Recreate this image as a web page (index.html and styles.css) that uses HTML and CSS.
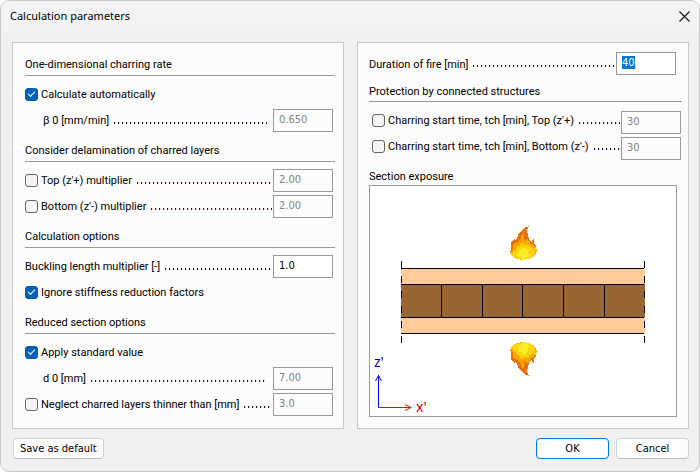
FILE: index.html
```html
<!DOCTYPE html>
<html lang="en">
<head>
<meta charset="utf-8">
<title>Calculation parameters</title>
<link rel="stylesheet" href="styles.css">
</head>
<body>
<form class="dialog">
  <header class="titlebar">
    <h1>Calculation parameters</h1>
    <button type="button" class="close" aria-label="Close"><svg width="11" height="11" viewBox="0 0 11 11"><path d="M.5.5l10 10M10.500.5l-10 10" stroke="#1a1a1a" stroke-width="1.200" fill="none"/></svg></button>
  </header>
  <main class="panels">
    <div class="panel left">
      <section>
        <h2>One-dimensional charring rate</h2>
        <div class="row"><input type="checkbox" id="auto" checked><label for="auto">Calculate automatically</label></div>
        <div class="row indent"><label for="beta">β 0 [mm/min]</label><span class="dots short"></span><input type="text" id="beta" value="0.650" disabled></div>
      </section>
      <section>
        <h2>Consider delamination of charred layers</h2>
        <div class="row"><input type="checkbox" id="top"><label for="top">Top (z'+) multiplier</label><span class="dots"></span><input type="text" aria-label="Top multiplier" value="2.00" disabled></div>
        <div class="row"><input type="checkbox" id="bottom"><label for="bottom">Bottom (z'-) multiplier</label><span class="dots"></span><input type="text" aria-label="Bottom multiplier" value="2.00" disabled></div>
      </section>
      <section>
        <h2>Calculation options</h2>
        <div class="row"><label for="buckling">Buckling length multiplier [-]</label><span class="dots"></span><input type="text" id="buckling" value="1.0"></div>
        <div class="row"><input type="checkbox" id="ignore" checked><label for="ignore">Ignore stiffness reduction factors</label></div>
      </section>
      <section>
        <h2>Reduced section options</h2>
        <div class="row"><input type="checkbox" id="standard" checked><label for="standard">Apply standard value</label></div>
        <div class="row indent"><label for="d0">d 0 [mm]</label><span class="dots short"></span><input type="text" id="d0" value="7.00" disabled></div>
        <div class="row"><input type="checkbox" id="neglect"><label for="neglect">Neglect charred layers thinner than [mm]</label><span class="dots"></span><input type="text" aria-label="Layer thickness" value="3.0" disabled></div>
      </section>
    </div>
    <div class="panel right">
      <div class="row duration"><label for="duration">Duration of fire [min]</label><span class="dots"></span><input type="text" id="duration" value="40" autofocus></div>
      <section class="protection">
        <h2>Protection by connected structures</h2>
        <div class="row"><input type="checkbox" id="tchtop"><label for="tchtop">Charring start time, tch [min], Top (z'+)</label><span class="dots"></span><input type="text" aria-label="Top start time" value="30" disabled></div>
        <div class="row"><input type="checkbox" id="tchbottom"><label for="tchbottom">Charring start time, tch [min], Bottom (z'-)</label><span class="dots"></span><input type="text" aria-label="Bottom start time" value="30" disabled></div>
      </section>
      <h2 class="plain">Section exposure</h2>
      <div class="drawing">
        <svg viewBox="0 0 306 230" shape-rendering="crispEdges">
          <defs>
            <g id="flame">
              <path fill="#e8720c" d="M19 0L16 1 12 4 9 7 7 12 5 14 5 12 2 15 1 18 1 24 0 26 2 30 7 33 13 34 19 33 25 29 27 25 26 20 24 17 24 13 22 14 22 17 20 15 18 10 17 4Z"/>
              <path fill="#f6a800" d="M12 8L11 12 9 14 8 18 6 16 5 18 3 18 3 23 0 26 2 30 7 33 13 34 19 33 25 29 27 25 26 20 24 20 22 17 21 19 19 14 17 13 16 15 14 14 14 10Z"/>
              <path fill="#fed30c" d="M12 16L10 19 9 21 7 20 6 25 4 24 3 27 1 27 3 31 8 33 13 34 19 33 24 29 25 25 26 22 24 22 23 24 21 20 20 21 18 17 17 20 15 18 14 20Z"/>
              <path fill="#fbec2c" d="M13 22L11 24 9 24 8 30 11 33 15 34 17 31 19 31 18 25 16 22Z"/>
            </g>
          </defs>
          <path fill="#ffcc99" d="M31 82H275V147H31Z"/>
          <path fill="#996633" d="M31 98H275V131H31Z"/>
          <path stroke="#000" fill="none" d="M31 82.500H274M31 98.500H274M31 131.500H274M31 147.500H274M71.500 98V131M112.500 98V131M152.500 98V131M193.500 98V131M234.500 98V131"/>
          <path stroke="#000" fill="none" stroke-dasharray="7 8" d="M31.500 75V157M274.500 75V157"/>
          <use href="#flame" x="140" y="40"/>
          <use href="#flame" transform="translate(140 190) scale(1 -1)"/>
          <path stroke="#00f" fill="none" shape-rendering="auto" d="M8.500 222V189M8.500 189.500L5.500 195M8.500 189.500L11.500 195"/>
          <path stroke="#f00" fill="none" shape-rendering="auto" d="M9 221.500H41M41 221.500L35 218.500M41 221.500L35 224.500"/>
          <text x="4" y="181" fill="#0000d0">z'</text>
          <text x="46" y="226" fill="#c80000">x'</text>
        </svg>
      </div>
    </div>
  </main>
  <footer class="actions">
    <button type="button" class="save">Save as default</button>
    <button type="submit" class="ok">OK</button>
    <button type="button">Cancel</button>
  </footer>
</form>
<script src="script.js"></script>
</body>
</html>
```
FILE: styles.css
```css
* { box-sizing: border-box; }
body { margin: 0; background: #fff; }
body { font: 11px/16px Roboto, sans-serif; color: #000; }
h1, h2 { margin: 0; font-weight: normal; font-size: inherit; }
h1 { font: 11px/16px "Noto Sans", sans-serif; }
.dialog { min-height: 100vh; display: flex; flex-direction: column; border: 1px solid #c6c6c6; border-radius: 9px; background: #f0f0f0; overflow: hidden; }
.titlebar { height: 30px; padding: 0 9px; display: flex; align-items: center; justify-content: space-between; background: #f3f3f3; }
.close { border: 0; background: none; padding: 0; width: 11px; height: 11px; display: flex; }
.panels { flex: 1; display: grid; grid-template-columns: 1fr 1fr; gap: 13px; padding: 11px 10px 9px 11px; }
.panel { border: 1px solid #c8c8c8; background: #fcfcfc; display: flex; flex-direction: column; }
.left { padding: 4px 8px 10px 12px; }
.right { padding: 7px 11px 11px; }
h2 { height: 29px; padding-top: 10px; margin-bottom: 5px; border-bottom: 1px solid #999; }
.row { height: 26px; display: flex; align-items: center; padding-right: 2px; }
.indent { padding-left: 18px; }
label { white-space: nowrap; padding-top: 2px; }
input[type="checkbox"] { appearance: none; flex: none; width: 13px; height: 13px; margin: 0 3px 0 0; border: 1px solid #666; border-radius: 3px; background: #f5f5f5; display: grid; place-items: center; }
input[type="checkbox"]:checked { border-color: #005fb8; background: #005fb8; }
input[type="checkbox"]:checked::after { content: ""; width: 6px; height: 3px; margin-top: -2px; border: solid #fff; border-width: 0 0 1px 1px; transform: rotate(-45deg); }
input[type="text"] { flex: none; width: 60px; height: 23px; padding: 0 5px 2px; border: 1px solid #999; border-radius: 0; outline: 0; background: #fff; font: 11px/16px "DejaVu Sans Condensed", sans-serif; color: #000; }
input[type="text"]:disabled { background: #fcfcfc; color: #838383; }
input::selection { background: #0078d7; color: #fff; }
.dots { flex: 1; height: 2px; margin: 6px 1px 0 5px; background: repeating-linear-gradient(90deg, #1c1440 0 1px, #e8dcd0 1px 2px, transparent 2px 4px); }
.short { margin-right: 6px; }
.duration { padding-right: 1px; }
.duration label { padding-top: 4px; }
.protection h2 { height: 26px; margin: 0 -5px 7px 0; padding-top: 8px; }
.protection .row { padding: 0 1px 0 3px; margin-right: -5px; }
.protection label, .protection input[type="checkbox"] { margin-bottom: 4px; }
.protection .dots { margin-top: 2px; }
.plain { height: 24px; padding-top: 8px; border: 0; margin: 0; }
.drawing { flex: 1; border: 1px solid #999; background: #fff; display: flex; }
.drawing svg { width: 100%; display: block; }
text { font: 14px "Noto Sans", sans-serif; }
.actions { display: flex; gap: 7px; padding: 0 10px 12px 12px; }
.actions button { min-width: 73px; height: 21px; padding: 0 6px; border: 1px solid #d0d0d0; border-bottom-color: #bbb; border-radius: 4px; background: #fdfdfd; font: 11px/16px "DejaVu Sans Condensed", sans-serif; color: #000; }
.actions .save { margin-right: auto; }
.actions .ok { border-color: #0078d4; }
```
FILE: script.js
```js
document.getElementById("duration").select();
```
